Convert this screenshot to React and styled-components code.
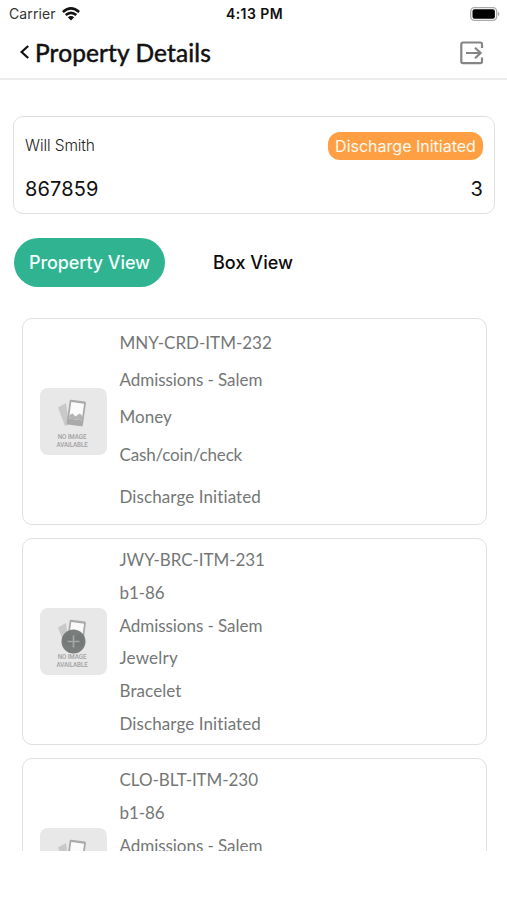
import React from "react";
import styled, { createGlobalStyle } from "styled-components";

const Global = createGlobalStyle`
  * { box-sizing: border-box; }
  body { margin: 0; background: #fff; font-family: Inter, "Liberation Sans", sans-serif; }
`;

const Screen = styled.div`
  width: 507px;
  height: 900px;
  overflow: hidden;
  background: #fff;
`;

const StatusBar = styled.div`
  height: 28px;
  padding: 0 7px 0 9px;
  display: grid;
  grid-template-columns: 1fr auto 1fr;
  align-items: center;
  color: #111;
  font-size: 14px;
  line-height: 28px;
`;

const Carrier = styled.div`
  display: flex;
  align-items: center;
  gap: 6px;
  color: #333;
  letter-spacing: 0.1px;
`;

const Clock = styled.div`
  font-weight: 600;
  font-size: 14px;
  letter-spacing: 0.45px;
`;

const Battery = styled.svg`
  justify-self: end;
  margin-top: -1px;
`;

const Header = styled.header`
  height: 52px;
  padding: 0 23px 0 19px;
  display: flex;
  align-items: center;
  border-bottom: 2px solid #ededed;
`;

const BackIcon = styled.svg`
  margin: 0 4px 2px 0;
`;

const Title = styled.h1`
  margin: 0;
  flex: 1;
  font: 400 24.5px/50px Lato, sans-serif;
  -webkit-text-stroke: 0.5px #111;
  letter-spacing: 0.12px;
  color: #111;
`;

const Summary = styled.section`
  margin: 35.5px 12px 0 13px;
  height: 98px;
  padding: 15px 11px 0 11px;
  border: 1.5px solid #dfdfdf;
  border-radius: 10px;
`;

const SummaryRow = styled.div`
  display: flex;
  justify-content: space-between;
  align-items: center;
  height: ${(p) => p.$h}px;
`;

const Person = styled.span`
  font-size: 15.5px;
  font-weight: 300;
  letter-spacing: -0.1px;
  color: #222;
`;

const Status = styled.span`
  width: 155px;
  height: 28px;
  border-radius: 12px;
  background: #ff9f43;
  color: #fffaf0;
  font-size: 16px;
  line-height: 28px;
  text-align: center;
  white-space: nowrap;
`;

const Figure = styled.span`
  font-size: 20px;
  letter-spacing: 0.15px;
  color: #111;
`;

const Tabs = styled.nav`
  display: flex;
  margin: 24.5px 0 0 14px;
`;

const Tab = styled.button`
  border: 0;
  padding: 0;
  height: 49px;
  width: ${(p) => p.$w}px;
  border-radius: 25px;
  background: ${(p) => (p.$active ? "#2fb391" : "transparent")};
  color: ${(p) => (p.$active ? "#f4fffb" : "#0b0b0b")};
  font: 500 18px/49px Inter, sans-serif;
  letter-spacing: ${(p) => (p.$active ? -0.1 : 0.05)}px;
  white-space: nowrap;
`;

const List = styled.main`
  margin-top: 30px;
  padding: 0.5px 20.5px 0 21.5px;
  height: 534px;
  display: flex;
  flex-direction: column;
  gap: 12.5px;
  overflow: hidden;
`;

const Card = styled.article`
  flex: none;
  height: 207.5px;
  padding-left: 17px;
  border: 1.5px solid #dfe1e0;
  border-radius: 10px;
  display: flex;
  align-items: center;
`;

const Thumb = styled.div`
  position: relative;
  width: 67px;
  height: 67px;
  border-radius: 8px;
  background: #e8e8e8;
  display: flex;
  flex-direction: column;
  align-items: center;
  padding: 11px 2px 0 0;
`;

const Caption = styled.div`
  margin-top: 5px;
  font: 500 7.6px/8px Roboto, sans-serif;
  letter-spacing: -0.1px;
  color: #a2a2a2;
  text-align: center;
  white-space: nowrap;
  transform: scaleX(0.82);
`;

const PlusBadge = styled.svg`
  position: absolute;
  left: 21px;
  top: 21px;
`;

const Fields = styled.div`
  align-self: flex-start;
  margin-left: 13px;
  padding-top: ${(p) => (p.$roomy ? 5 : 5.8)}px;
`;

const Field = styled.div`
  font: 400 17px/${(p) => (p.$roomy ? 37.4 : 32.7)}px Lato, sans-serif;
  color: #747776;
  letter-spacing: ${(p) => p.$track}px;
  white-space: nowrap;
  ${(p) => p.$roomy && "&:last-child { margin-top: 4.5px; }"}
`;

const code = (text) => ({ text, track: -0.06 });
const line = (text, track = 0.1) => ({ text, track });
const place = line("Admissions - Salem", -0.05);

const items = [
  {
    roomy: true,
    fields: [line("MNY-CRD-ITM-232", 0), place, line("Money", 0.05), line("Cash/coin/check", -0.16), line("Discharge Initiated")],
  },
  {
    plus: true,
    fields: [code("JWY-BRC-ITM-231"), line("b1-86", -0.05), place, line("Jewelry", 0.2), line("Bracelet"), line("Discharge Initiated")],
  },
  { fields: [code("CLO-BLT-ITM-230"), line("b1-86", -0.05), place] },
];

function NoImage({ plus }) {
  return (
    <Thumb>
      <svg width="30" height="29" viewBox="0 0 30 29">
        <path d="M1 8.5 9 4 12 25.5 8 27Z" fill="#c9c9c9" />
        <g transform="rotate(8 19 14)">
          <rect x="11" y="1.5" width="16.5" height="25" rx="1.5" fill="#aaa" />
          <rect x="12.8" y="3.7" width="12.9" height="16.8" fill="#fafafa" />
          <path d="M12.8 20.5v-3.5l3-2 3 2.5 4-3.5 2.9 2v4.5Z" fill="#b3b3b3" />
        </g>
      </svg>
      <Caption>NO IMAGE<br />AVAILABLE</Caption>
      {plus && (
        <PlusBadge width="25" height="25" viewBox="0 0 25 25">
          <circle cx="12.5" cy="12.5" r="12" fill="#707473" fillOpacity=".93" />
          <path d="M12.5 6.5v12M6.5 12.5h12" stroke="#a4a8a7" strokeWidth="1.7" />
        </PlusBadge>
      )}
    </Thumb>
  );
}

export default function App() {
  return (
    <Screen>
      <Global />
      <StatusBar>
        <Carrier>
          Carrier
          <svg width="18" height="14" viewBox="0 0 18 14" fill="none" stroke="#111" strokeWidth="2.6">
            <path d="M.9 5Q9-2.1 17.1 5M3.7 8.1Q9 3.5 14.3 8.1" />
            <path d="M5.8 10.2Q9 7.6 12.2 10.2L9 13.5Z" fill="#111" stroke="none" />
          </svg>
        </Carrier>
        <Clock>4:13 PM</Clock>
        <Battery width="30" height="14" viewBox="0 0 30 14">
          <rect x=".7" y=".7" width="26" height="12.6" rx="3.8" fill="#fff" stroke="#aaa" strokeWidth="1.3" />
          <rect x="2.5" y="2.3" width="22.4" height="9.4" rx="2" fill="#000" />
          <path d="M28 4.8q3 2.2 0 4.4Z" fill="#aaa" />
        </Battery>
      </StatusBar>
      <Header>
        <BackIcon width="12" height="16" viewBox="0 0 12 16">
          <path d="M9.2 2 2.6 8l6.6 6" fill="none" stroke="#111" strokeWidth="2.2" />
        </BackIcon>
        <Title>Property Details</Title>
        <svg width="24" height="24" viewBox="0 0 24 24" fill="none" stroke="#858585" strokeWidth="2.2">
          <path d="M22 7V3.2Q22 1.5 20.3 1.5H3Q1.3 1.5 1.3 3.2v17.3q0 1.7 1.7 1.7H20.3q1.7 0 1.7-1.7V16.5" />
          <path d="M6 12h14.5M15 6.8l5.6 5.2-5.6 5.2" />
        </svg>
      </Header>
      <Summary>
        <SummaryRow $h={28}>
          <Person>Will Smith</Person>
          <Status>Discharge Initiated</Status>
        </SummaryRow>
        <SummaryRow $h={58}>
          <Figure>867859</Figure>
          <Figure>3</Figure>
        </SummaryRow>
      </Summary>
      <Tabs>
        <Tab $active $w={151}>Property View</Tab>
        <Tab $w={176}>Box View</Tab>
      </Tabs>
      <List>
        {items.map((item) => (
          <Card key={item.fields[0].text}>
            <NoImage plus={item.plus} />
            <Fields $roomy={item.roomy}>
              {item.fields.map((f) => (
                <Field key={f.text} $roomy={item.roomy} $track={f.track}>{f.text}</Field>
              ))}
            </Fields>
          </Card>
        ))}
      </List>
    </Screen>
  );
}
